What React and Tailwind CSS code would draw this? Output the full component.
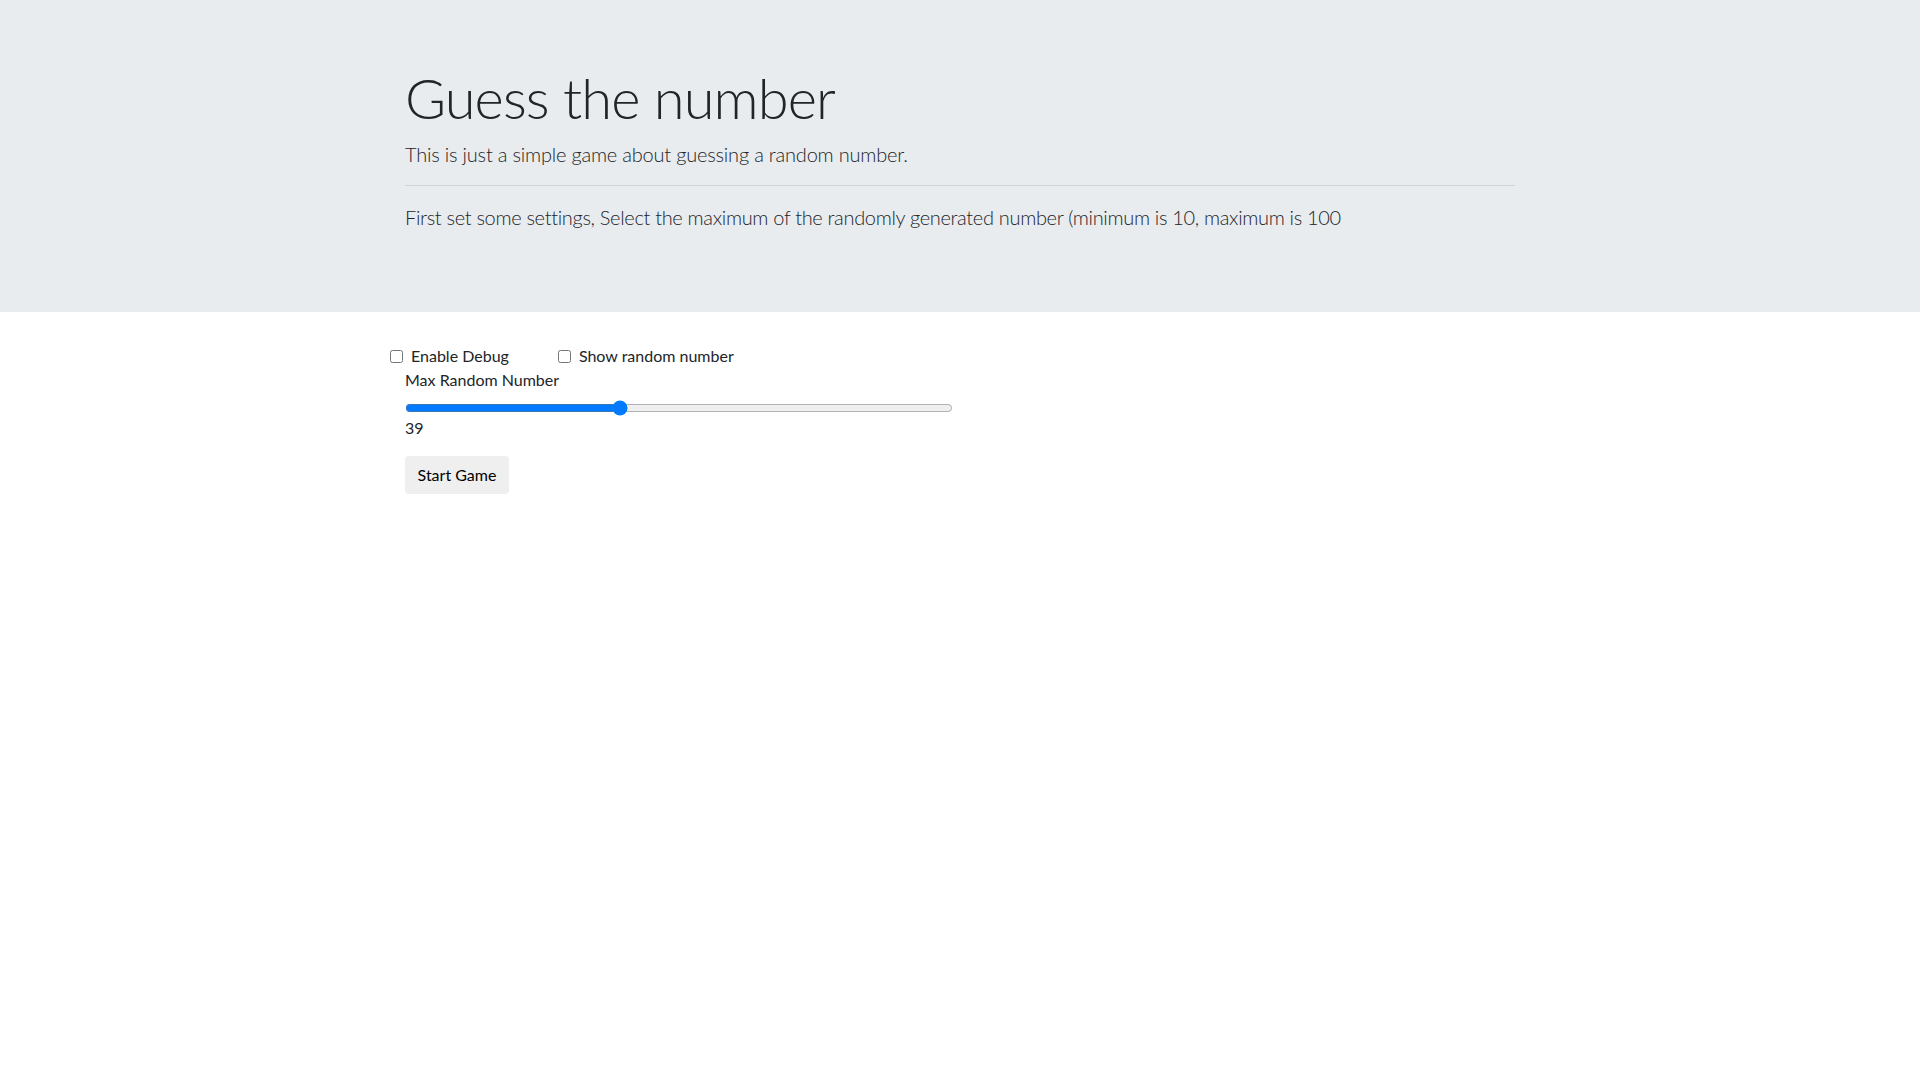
import React, { useState } from "react";

export default function App() {
  const [val, setVal] = useState(39);
  return (
    <div className="min-h-[1080px] bg-white text-[#212529]" style={{ fontFamily: "Lato, 'Open Sans', sans-serif" }}>
      <div className="bg-[#e9ecef] pt-16 pb-16 mb-8">
        <div className="w-[1140px] mx-auto px-[15px]">
          <h1 className="text-[56px] font-light leading-[1.2] mb-2 tracking-[-0.016em]">Guess the number</h1>
          <p className="text-[20px] font-light leading-[1.5] mb-4 tracking-[-0.01em]">This is just a simple game about guessing a random number.</p>
          <hr className="border-0 border-t border-t-[rgba(0,0,0,0.1)] my-4" />
          <p className="text-[20px] font-light leading-[1.5] mb-4 tracking-[-0.016em]">
            First set some settings, Select the maximum of the randomly generated number (minimum is 10, maximum is 100
          </p>
        </div>
      </div>
      <div className="w-[1140px] mx-auto px-[15px]">
        <div className="flex items-center -ml-[15px] h-6 text-[16px]">
          <label className="flex items-center">
            <input type="checkbox" className="w-[13px] h-[13px] m-0 mr-2" />
            <span>Enable Debug</span>
          </label>
          <label className="flex items-center ml-[49px]">
            <input type="checkbox" className="w-[13px] h-[13px] m-0 mr-2" />
            <span>Show random number</span>
          </label>
        </div>
        <div className="leading-6 text-[16px]">Max Random Number</div>
        <div className="h-4 mt-[8px] flex items-center">
          <input
            type="range"
            min="0"
            max="100"
            value={val}
            onChange={(e) => setVal(Number(e.target.value))}
            className="w-[548px] m-0 accent-[#007bff]"
          />
        </div>
        <div className="leading-6 text-[16px]">{val}</div>
        <button className="mt-4 bg-[#efefef] rounded-[4px] w-[104px] h-[38px] text-[16px] text-black">Start Game</button>
      </div>
    </div>
  );
}
